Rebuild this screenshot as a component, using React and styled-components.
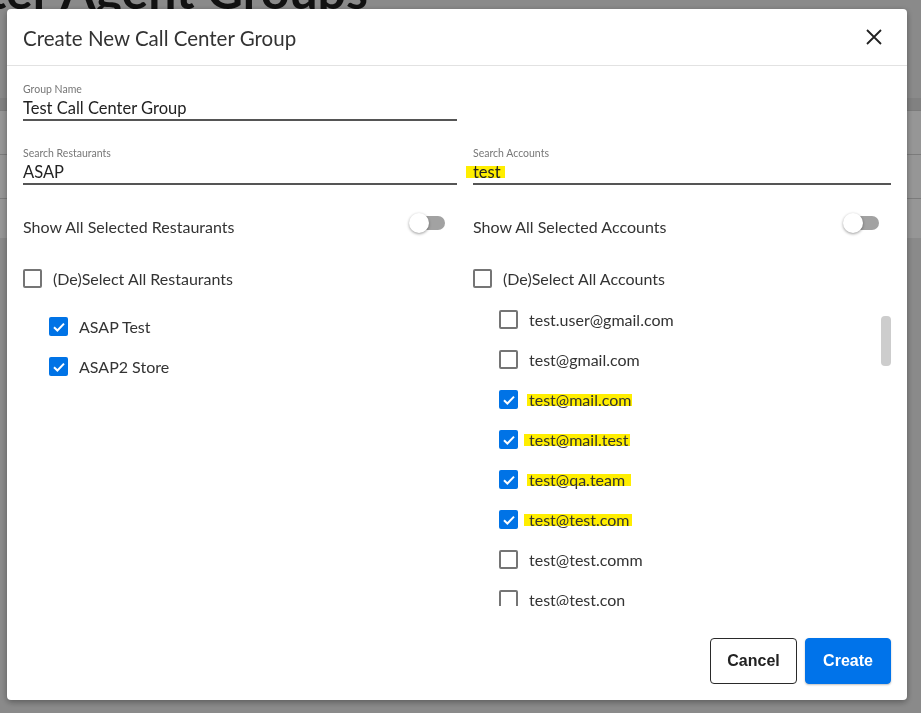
import React from "react";
import styled, { createGlobalStyle } from "styled-components";

const GlobalStyle = createGlobalStyle`
  html, body {
    margin: 0;
    padding: 0;
    background: #eaeaea;
    font-family: Lato, "Open Sans", sans-serif;
  }
  * { box-sizing: border-box; }
`;

const Page = styled.div`
  width: 921px;
  height: 713px;
  overflow: hidden;
  background: #eaeaea;
`;

const HeadingBox = styled.div`
  width: 368px;
  display: flex;
  justify-content: flex-end;
  margin-top: -35px;
  height: 50px;
`;

const Heading = styled.h1`
  margin: 0;
  white-space: nowrap;
  font-size: 50px;
  line-height: 50px;
  font-weight: 700;
  color: #1e1e1e;
`;

const Table = styled.div`
  margin-top: 83px;
  background: #fff;
`;

const TableHead = styled.div`
  height: 12px;
  background: #dcdcdc;
`;

const TableRow = styled.div`
  height: ${(p) => p.h}px;
  border-top: 1px solid #d2d2d2;
`;

const Overlay = styled.div`
  position: fixed;
  inset: 0;
  background: rgba(0, 0, 0, 0.41);
  padding: 9px 0 0 7px;
`;

const Modal = styled.div`
  width: 900px;
  background: #fff;
  border-radius: 4px;
  box-shadow: 0 2px 6px rgba(0, 0, 0, 0.35);
  display: flex;
  flex-direction: column;
`;

const Header = styled.div`
  height: 57px;
  padding: 0 25px 0 16px;
  border-bottom: 1px solid #e2e2e2;
  display: flex;
  align-items: center;
  justify-content: space-between;
`;

const Title = styled.h2`
  margin: 1px 0 0;
  font-size: 20.5px;
  font-weight: 400;
  color: #333;
`;

const CloseButton = styled.button`
  border: 0;
  background: none;
  padding: 0;
  display: flex;
  cursor: pointer;
`;

const Body = styled.div`
  padding: 17px 16px 0;
`;

const Field = styled.div`
  width: ${(p) => p.w || "100%"};
  margin-bottom: ${(p) => p.mb || 0}px;
`;

const Label = styled.div`
  font-size: 10.5px;
  line-height: 12px;
  color: #777;
`;

const Input = styled.div`
  height: 26px;
  padding-top: 1px;
  font-size: 16.5px;
  line-height: 24px;
  color: #222;
  border-bottom: 2px solid #555;
`;

const Highlight = styled.span`
  background: linear-gradient(transparent 4px, #ffee00 4px, #ffee00 16px, transparent 16px);
  padding: 0 ${(p) => p.pr || 0}px 0 ${(p) => p.pl || 0}px;
  margin-left: -${(p) => p.pl || 0}px;
`;

const Columns = styled.div`
  display: grid;
  grid-template-columns: 434px 418px;
  column-gap: 16px;
`;

const Column = styled.div`
  display: flex;
  flex-direction: column;
`;

const ToggleRow = styled.div`
  margin-top: 21px;
  height: 40px;
  display: flex;
  align-items: center;
  justify-content: space-between;
  font-size: 16px;
  color: #333;
`;

const Switch = styled.div`
  position: relative;
  width: 36px;
  height: 20px;
  margin: 0 12px 6px 0;
`;

const Track = styled.div`
  position: absolute;
  left: 10px;
  right: 0;
  top: 3px;
  height: 14px;
  border-radius: 7px;
  background: #a2a2a2;
`;

const Thumb = styled.div`
  position: absolute;
  left: 0;
  top: 0;
  width: 20px;
  height: 20px;
  border-radius: 50%;
  background: #fff;
  box-shadow: 0 1px 3px rgba(0, 0, 0, 0.4);
`;

const CheckRow = styled.div`
  height: 40px;
  display: flex;
  align-items: center;
  gap: 11px;
  padding-left: ${(p) => p.indent || 0}px;
  margin-top: ${(p) => p.mt || 0}px;
  font-size: 16px;
  color: #333;
  white-space: nowrap;
`;

const Box = styled.span`
  width: 19px;
  height: 19px;
  flex: none;
  border-radius: 2px;
  margin-top: 1px;
  display: flex;
  align-items: center;
  justify-content: center;
  background: ${(p) => (p.checked ? "#0073e6" : "#fff")};
  border: ${(p) => (p.checked ? "none" : "2px solid #757575")};
`;

const List = styled.div`
  position: relative;
  padding-top: ${(p) => p.pt}px;
  height: 308px;
  overflow: hidden;
`;

const ScrollThumb = styled.div`
  position: absolute;
  right: 0;
  top: 18px;
  width: 10px;
  height: 50px;
  border-radius: 4px;
  background: #cdcdcd;
`;

const Footer = styled.div`
  padding: 32px 16px 16px;
  display: flex;
  justify-content: flex-end;
  gap: 8px;
`;

const Button = styled.button`
  height: 46px;
  width: ${(p) => p.w}px;
  border-radius: 4px;
  font-family: "Liberation Sans", Arial, sans-serif;
  font-size: 16px;
  font-weight: 700;
  cursor: pointer;
  border: 1px solid ${(p) => (p.primary ? "#0073ea" : "#2a2a2a")};
  background: ${(p) => (p.primary ? "#0073ea" : "#fff")};
  color: ${(p) => (p.primary ? "#fff" : "#222")};
  box-shadow: ${(p) => (p.primary ? "0 1px 2px rgba(0,0,0,0.25)" : "none")};
`;

const Check = ({ checked }) => (
  <Box checked={checked}>
    {checked && (
      <svg width="14" height="14" viewBox="0 0 14 14">
        <path d="M2 7.2 L5.4 10.5 L12 3.6" fill="none" stroke="#fff" strokeWidth="2" />
      </svg>
    )}
  </Box>
);

const restaurants = ["ASAP Test", "ASAP2 Store"];

const accounts = [
  { name: "test.user@gmail.com" },
  { name: "test@gmail.com" },
  { name: "test@mail.com", checked: true, pl: 2, pr: 1 },
  { name: "test@mail.test", checked: true, pl: 5, pr: 1 },
  { name: "test@qa.team", checked: true, pl: 2, pr: 6 },
  { name: "test@test.com", checked: true, pl: 5, pr: 2 },
  { name: "test@test.comm" },
  { name: "test@test.con" },
];

export default function App() {
  return (
    <>
      <GlobalStyle />
      <Page>
        <HeadingBox>
          <Heading>Call Center Agent Groups</Heading>
        </HeadingBox>
        <Table>
          <TableHead />
          <TableRow h={44} />
          <TableRow h={44} />
          <TableRow h={40} />
        </Table>
      </Page>
      <Overlay>
        <Modal>
          <Header>
            <Title>Create New Call Center Group</Title>
            <CloseButton>
              <svg width="16" height="16" viewBox="0 0 16 16">
                <path d="M1 1 L15 15 M15 1 L1 15" stroke="#222" strokeWidth="1.8" />
              </svg>
            </CloseButton>
          </Header>
          <Body>
            <Field w="434px" mb={26}>
              <Label>Group Name</Label>
              <Input>Test Call Center Group</Input>
            </Field>
            <Columns>
              <Column>
                <Field>
                  <Label>Search Restaurants</Label>
                  <Input>ASAP</Input>
                </Field>
                <ToggleRow>
                  Show All Selected Restaurants
                  <Switch>
                    <Track />
                    <Thumb />
                  </Switch>
                </ToggleRow>
                <CheckRow mt={12}>
                  <Check />
                  (De)Select All Restaurants
                </CheckRow>
                <List pt={8}>
                  {restaurants.map((r) => (
                    <CheckRow indent={26} key={r}>
                      <Check checked />
                      {r}
                    </CheckRow>
                  ))}
                </List>
              </Column>
              <Column>
                <Field>
                  <Label>Search Accounts</Label>
                  <Input>
                    <Highlight pl={7} pr={4}>test</Highlight>
                  </Input>
                </Field>
                <ToggleRow>
                  Show All Selected Accounts
                  <Switch>
                    <Track />
                    <Thumb />
                  </Switch>
                </ToggleRow>
                <CheckRow mt={12}>
                  <Check />
                  (De)Select All Accounts
                </CheckRow>
                <List pt={1}>
                  {accounts.map((a) => (
                    <CheckRow indent={26} key={a.name}>
                      <Check checked={a.checked} />
                      {a.checked ? (
                        <Highlight pl={a.pl} pr={a.pr}>{a.name}</Highlight>
                      ) : (
                        a.name
                      )}
                    </CheckRow>
                  ))}
                  <ScrollThumb />
                </List>
              </Column>
            </Columns>
          </Body>
          <Footer>
            <Button w={87}>Cancel</Button>
            <Button w={86} primary>
              Create
            </Button>
          </Footer>
        </Modal>
      </Overlay>
    </>
  );
}
